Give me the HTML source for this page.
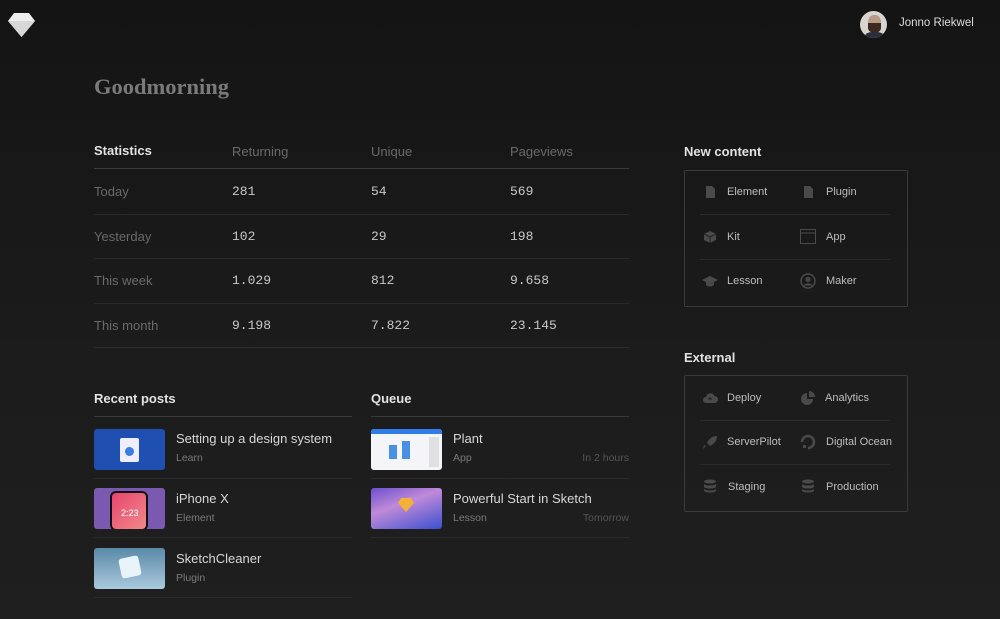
<!DOCTYPE html>
<html><head><meta charset="utf-8"><style>
*{margin:0;padding:0;box-sizing:border-box}
body{width:1000px;height:619px;overflow:hidden;background:linear-gradient(#141414,#1c1c1c 60%,#1f1f1f);font-family:"Liberation Sans",sans-serif;position:relative;color:#ccc}
.a{position:absolute;white-space:nowrap}
.h{font-size:13px;color:#e2e2e2;font-weight:bold}
.col{font-size:13px;color:#6a6a6a}
.lbl{font-size:13px;color:#6a6a6a}
.num{font-family:"Liberation Mono",monospace;font-size:13px;color:#c8c8c8}
.ln{position:absolute;height:1px;background:#2a2a2a}
.box{position:absolute;border:1px solid #3a3a3a;border-radius:2px;width:224px;height:137px}
.it{font-size:11px;color:#bdbdbd}
.ic{position:absolute;width:14px;height:14px}
.th{position:absolute;width:71px;height:41px;border-radius:3px;overflow:hidden}
.t1{font-size:13px;color:#d8d8d8}
.t2{font-size:10.5px;color:#7a7a7a}
.r{text-align:right;width:100px}
</style></head><body>
<svg class="a" style="left:8px;top:12px" width="27" height="26" viewBox="0 0 27 26"><path d="M6 1h15l6 8-13.5 16L0 9z" fill="#eee"/><path d="M0 9h27L13.5 25z" fill="#d8d8d8"/></svg>
<div class="a" style="left:860px;top:11px;width:27px;height:27px;border-radius:50%;background:#d8d4d0;overflow:hidden"><div style="position:absolute;left:8px;top:4px;width:13px;height:16px;border-radius:45%;background:#b89a88"></div><div style="position:absolute;left:8px;top:12px;width:13px;height:10px;border-radius:0 0 50% 50%;background:#3a2a22"></div><div style="position:absolute;left:5px;top:21px;width:19px;height:10px;border-radius:40% 40% 0 0;background:#2a2e3a"></div></div>
<div class="a" style="left:899px;top:16px;font-size:11.5px;color:#ddd;line-height:15px">Jonno Riekwel</div>
<div class="a" style="left:94px;top:74px;font-family:'Liberation Serif',serif;font-weight:bold;font-size:22.5px;color:#7a7a7a">Goodmorning</div>

<div class="a h" style="left:94px;top:143px">Statistics</div>
<div class="a col" style="left:232px;top:144px">Returning</div>
<div class="a col" style="left:371px;top:144px">Unique</div>
<div class="a col" style="left:510px;top:144px">Pageviews</div>
<div class="ln" style="left:94px;top:168px;width:535px;background:#3a3a3a"></div>
<div class="a lbl" style="left:94px;top:184px">Today</div><div class="a num" style="left:232px;top:184px">281</div><div class="a num" style="left:371px;top:184px">54</div><div class="a num" style="left:510px;top:184px">569</div>
<div class="ln" style="left:94px;top:214px;width:535px"></div>
<div class="a lbl" style="left:94px;top:229px">Yesterday</div><div class="a num" style="left:232px;top:229px">102</div><div class="a num" style="left:371px;top:229px">29</div><div class="a num" style="left:510px;top:229px">198</div>
<div class="ln" style="left:94px;top:258px;width:535px"></div>
<div class="a lbl" style="left:94px;top:273px">This week</div><div class="a num" style="left:232px;top:273px">1.029</div><div class="a num" style="left:371px;top:273px">812</div><div class="a num" style="left:510px;top:273px">9.658</div>
<div class="ln" style="left:94px;top:303px;width:535px"></div>
<div class="a lbl" style="left:94px;top:318px">This month</div><div class="a num" style="left:232px;top:318px">9.198</div><div class="a num" style="left:371px;top:318px">7.822</div><div class="a num" style="left:510px;top:318px">23.145</div>
<div class="ln" style="left:94px;top:347px;width:535px"></div>

<div class="a h" style="left:684px;top:144px">New content</div>
<div class="box" style="left:684px;top:170px"></div>
<div class="ln" style="left:700px;top:214px;width:190px"></div><div class="ln" style="left:700px;top:259px;width:190px"></div>
<svg class="ic" style="left:703px;top:185px" viewBox="0 0 14 14"><path d="M3 1h6l3 3v9H3z" fill="#4a4a4a"/></svg>
<div class="a it" style="left:727px;top:186px">Element</div>
<svg class="ic" style="left:801px;top:185px" viewBox="0 0 14 14"><path d="M3 1h6l3 3v9H3z" fill="#4a4a4a"/></svg>
<div class="a it" style="left:826px;top:186px">Plugin</div>
<svg class="ic" style="left:703px;top:230px" viewBox="0 0 14 14"><path d="M7 1l6 3v6l-6 3-6-3V4z" fill="#4a4a4a"/><path d="M1 4l6 3 6-3M7 7v6" stroke="#222" fill="none"/></svg>
<div class="a it" style="left:727px;top:231px">Kit</div>
<svg class="ic" style="left:800px;top:229px;width:16px;height:15px" viewBox="0 0 16 15"><rect x="0.5" y="0.5" width="15" height="14" fill="none" stroke="#4a4a4a"/><path d="M1 4h14" stroke="#4a4a4a"/></svg>
<div class="a it" style="left:826px;top:231px">App</div>
<svg class="ic" style="left:702px;top:274px;width:16px" viewBox="0 0 16 14"><path d="M8 2l8 4-8 4-8-4z" fill="#4a4a4a"/><path d="M4 8v3c2 2 6 2 8 0V8l-4 2z" fill="#4a4a4a"/></svg>
<div class="a it" style="left:727px;top:275px">Lesson</div>
<svg class="ic" style="left:800px;top:273px;width:16px;height:16px" viewBox="0 0 16 16"><circle cx="8" cy="8" r="7" fill="none" stroke="#4a4a4a" stroke-width="1.5"/><circle cx="8" cy="6.5" r="2.5" fill="#4a4a4a"/><path d="M3.5 12.5c2-3 7-3 9 0" fill="#4a4a4a"/></svg>
<div class="a it" style="left:826px;top:275px">Maker</div>

<div class="a h" style="left:684px;top:350px">External</div>
<div class="box" style="left:684px;top:375px"></div>
<div class="ln" style="left:700px;top:420px;width:190px"></div><div class="ln" style="left:700px;top:464px;width:190px"></div>
<svg class="ic" style="left:702px;top:391px;width:16px" viewBox="0 0 16 14"><path d="M4 12a3 3 0 010-6 4.5 4.5 0 018.5-1A3.5 3.5 0 0112.5 12z" fill="#4a4a4a"/><path d="M8 6l-2.5 2.5h5z" fill="#222"/></svg>
<div class="a it" style="left:727px;top:392px">Deploy</div>
<svg class="ic" style="left:800px;top:390px;width:16px;height:16px" viewBox="0 0 16 16"><path d="M7 3a6 6 0 106 6H7z" fill="#4a4a4a"/><path d="M9 1a6 6 0 016 6H9z" fill="#4a4a4a"/></svg>
<div class="a it" style="left:825px;top:392px">Analytics</div>
<svg class="ic" style="left:702px;top:435px;width:16px;height:15px" viewBox="0 0 16 15"><path d="M15 1c-5 0-8 3-10 7l3 3c4-2 7-5 7-10z" fill="#4a4a4a"/><path d="M4 11l-3 3 1-4z" fill="#4a4a4a"/></svg>
<div class="a it" style="left:727px;top:436px">ServerPilot</div>
<svg class="ic" style="left:800px;top:434px;width:16px;height:16px" viewBox="0 0 16 16"><path d="M8 14A6 6 0 102 8" fill="none" stroke="#4a4a4a" stroke-width="2.5"/><rect x="3" y="11" width="3" height="3" fill="#4a4a4a"/></svg>
<div class="a it" style="left:826px;top:436px">Digital Ocean</div>
<svg class="ic" style="left:703px;top:479px" viewBox="0 0 14 14"><ellipse cx="7" cy="2.5" rx="6" ry="2" fill="#4a4a4a"/><path d="M1 4.5c0 2.7 12 2.7 12 0v3c0 2.7-12 2.7-12 0zM1 9.5c0 2.7 12 2.7 12 0v2c0 2.7-12 2.7-12 0z" fill="#4a4a4a"/></svg>
<div class="a it" style="left:728px;top:481px">Staging</div>
<svg class="ic" style="left:801px;top:479px" viewBox="0 0 14 14"><ellipse cx="7" cy="2.5" rx="6" ry="2" fill="#4a4a4a"/><path d="M1 4.5c0 2.7 12 2.7 12 0v3c0 2.7-12 2.7-12 0zM1 9.5c0 2.7 12 2.7 12 0v2c0 2.7-12 2.7-12 0z" fill="#4a4a4a"/></svg>
<div class="a it" style="left:826px;top:481px">Production</div>

<div class="a h" style="left:94px;top:391px">Recent posts</div>
<div class="ln" style="left:94px;top:416px;width:258px;background:#3a3a3a"></div>
<div class="th" style="left:94px;top:429px;background:#1f4fb0"><div style="position:absolute;left:26px;top:9px;width:19px;height:24px;background:#eef;border-radius:2px"></div><div style="position:absolute;left:31px;top:18px;width:9px;height:9px;border-radius:50%;background:#3a7fe0"></div></div>
<div class="a t1" style="left:176px;top:431px">Setting up a design system</div><div class="a t2" style="left:176px;top:452px">Learn</div>
<div class="ln" style="left:94px;top:478px;width:258px"></div>
<div class="th" style="left:94px;top:488px;background:#7a5ab0"><div style="position:absolute;left:16px;top:3px;width:38px;height:40px;border-radius:6px;background:linear-gradient(135deg,#e8456e,#f08a8a);border:2px solid #111"></div><div style="position:absolute;left:27px;top:20px;font-size:9px;color:#fff">2:23</div></div>
<div class="a t1" style="left:176px;top:491px">iPhone X</div><div class="a t2" style="left:176px;top:512px">Element</div>
<div class="ln" style="left:94px;top:537px;width:258px"></div>
<div class="th" style="left:94px;top:548px;background:linear-gradient(#5a8aa8,#a9c9dc)"><div style="position:absolute;left:26px;top:9px;width:20px;height:20px;background:#e8f4fa;transform:rotate(-12deg);border-radius:3px"></div></div>
<div class="a t1" style="left:176px;top:551px">SketchCleaner</div><div class="a t2" style="left:176px;top:572px">Plugin</div>
<div class="ln" style="left:94px;top:597px;width:258px"></div>

<div class="a h" style="left:371px;top:391px">Queue</div>
<div class="ln" style="left:371px;top:416px;width:258px;background:#3a3a3a"></div>
<div class="th" style="left:371px;top:429px;background:#f4f5f8"><div style="height:5px;background:#2f7be8"></div><div style="position:absolute;left:18px;top:16px;width:8px;height:14px;background:#4a90e2"></div><div style="position:absolute;left:31px;top:12px;width:8px;height:18px;background:#4a90e2"></div><div style="position:absolute;left:58px;top:8px;width:10px;height:30px;background:#ccc;opacity:.5"></div></div>
<div class="a t1" style="left:453px;top:431px">Plant</div><div class="a t2" style="left:453px;top:452px">App</div><div class="a t2 r" style="left:529px;top:452px;color:#555">In 2 hours</div>
<div class="ln" style="left:371px;top:478px;width:258px"></div>
<div class="th" style="left:371px;top:488px;background:linear-gradient(160deg,#6a4fd0,#c08ad8 40%,#3a50d0)"><div style="position:absolute;left:27px;top:10px;width:16px;height:14px;background:#f4b13a;clip-path:polygon(20% 0,80% 0,100% 35%,50% 100%,0 35%)"></div></div>
<div class="a t1" style="left:453px;top:491px">Powerful Start in Sketch</div><div class="a t2" style="left:453px;top:512px">Lesson</div><div class="a t2 r" style="left:529px;top:512px;color:#555">Tomorrow</div>
<div class="ln" style="left:371px;top:537px;width:258px"></div>
</body></html>
